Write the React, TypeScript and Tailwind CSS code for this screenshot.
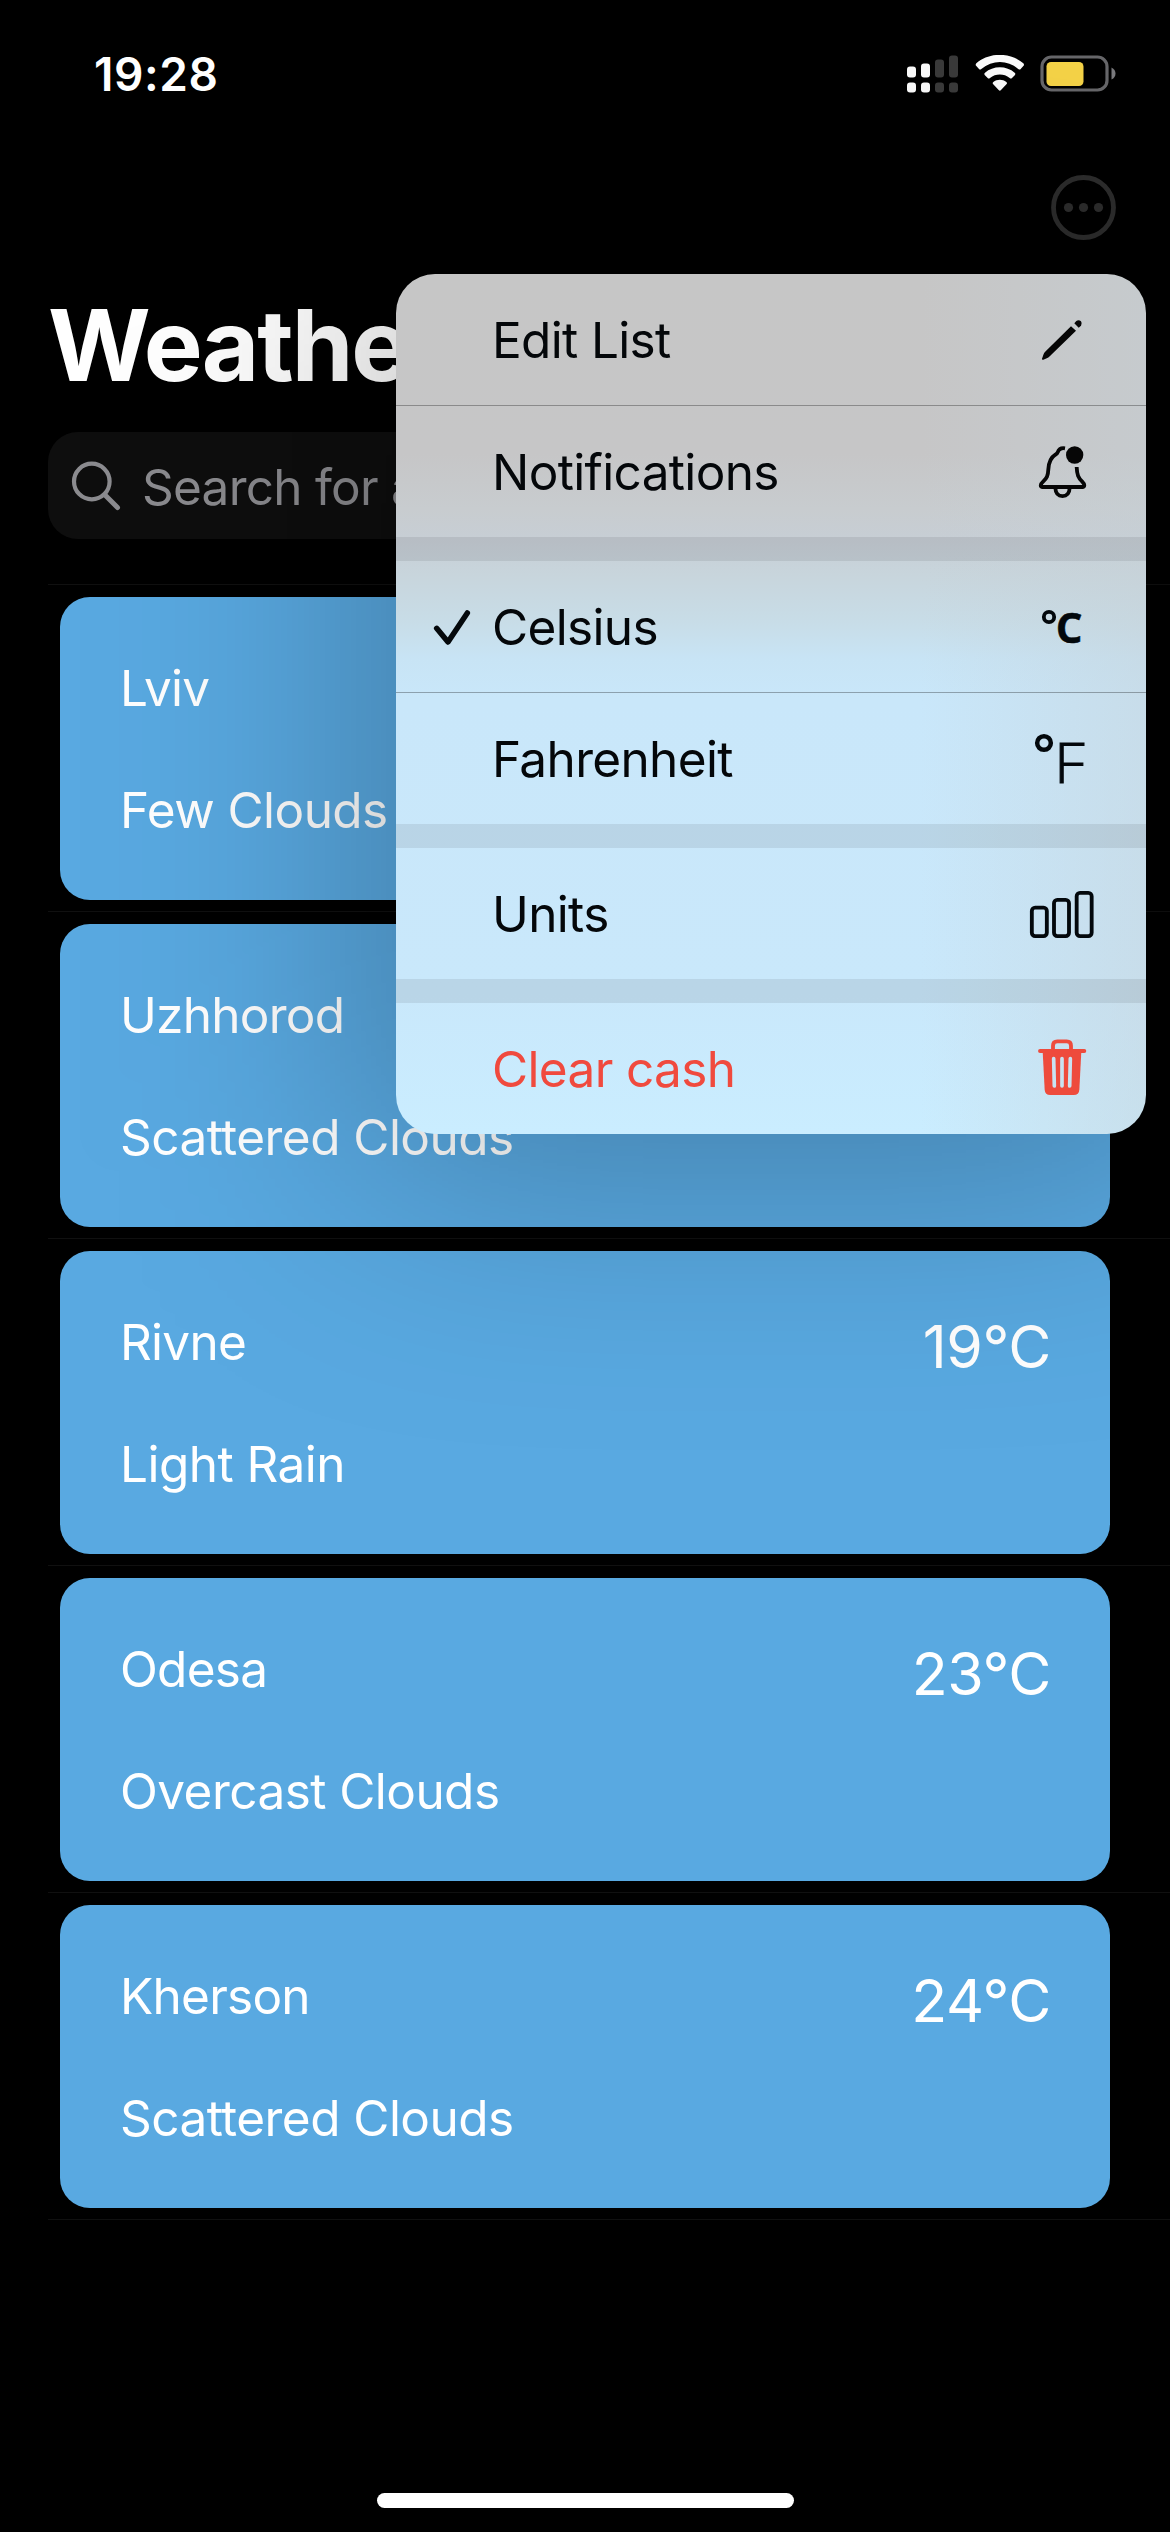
import React from "react";

const cities = [
  { name: "Lviv", sky: "Few Clouds", temp: "18°C" },
  { name: "Uzhhorod", sky: "Scattered Clouds", temp: "21°C" },
  { name: "Rivne", sky: "Light Rain", temp: "19°C" },
  { name: "Odesa", sky: "Overcast Clouds", temp: "23°C" },
  { name: "Kherson", sky: "Scattered Clouds", temp: "24°C" },
];

function StatusBar() {
  return (
    <header className="flex h-[148px] items-center justify-between pr-[53px] pl-[94px]">
      <span className="text-[46px] leading-none font-semibold tracking-[0.6px]">19:28</span>
      <div className="flex items-center">
        <svg className="h-[38px] w-[52px]" viewBox="0 0 52 38">
          <g fill="#fff">
            <rect x="0" y="11.5" width="9" height="11" rx="3" />
            <rect x="14" y="8.5" width="9" height="14" rx="3" />
            <rect x="0" y="27.5" width="9" height="10" rx="3" />
            <rect x="14" y="27.5" width="9" height="10" rx="3" />
          </g>
          <g fill="#3b3b3b">
            <rect x="28" y="4.5" width="9" height="18" rx="3" />
            <rect x="42" y="0.5" width="9" height="22" rx="3" />
            <rect x="28" y="27.5" width="9" height="10" rx="3" />
            <rect x="42" y="27.5" width="9" height="10" rx="3" />
          </g>
        </svg>
        <svg className="ml-[16px] h-[38px] w-[50px]" viewBox="0 0 150 114">
          <g fill="#fff">
            <path d="M4 33 Q0 29 4 25 C42 -9 106 -9 145 25 Q149 29 145 33 L137 42 Q134 45 130 42 C98 14 52 14 19 42 Q15 45 12 42 Z" />
            <path d="M29 60 Q26 56 30 53 C54 31 95 31 119 53 Q123 56 120 60 L111 69 Q108 72 104 69 C87 55 62 55 45 69 Q41 72 38 69 Z" />
            <path d="M54 87 Q51 84 55 81 C66 72 83 72 94 81 Q98 84 95 87 L78 105 Q74.5 109 71 105 Z" />
          </g>
        </svg>
        <svg className="ml-[15px] h-[38px] w-[77px]" viewBox="0 0 77 38">
          <rect x="2" y="2" width="65" height="33" rx="9.5" fill="none" stroke="#68686b" strokeWidth="3.2" />
          <rect x="6.5" y="7" width="37" height="24" rx="4.5" fill="#f8d648" />
          <path d="M71.5 12.5 q4 2 4 6 q0 4 -4 6 z" fill="#7b7b7e" />
        </svg>
      </div>
    </header>
  );
}

function CityRow({ name, sky, temp }: { name: string; sky: string; temp: string }) {
  return (
    <li className="border-t border-[#101010] pt-[12px] pr-[60px] pb-[11px] pl-[12px]">
      <article className="flex h-[303px] justify-between rounded-[30px] bg-[#59a9e1] pr-[59px] pl-[60px]">
        <div className="flex flex-col pt-[61px] text-[49.5px] leading-[60px]">
          <h2 className="tracking-[-0.75px]">{name}</h2>
          <p className="mt-[62px] tracking-[-0.55px]">{sky}</p>
        </div>
        <span className="pt-[60px] text-[59px] leading-[72px] tracking-[-0.4px]">{temp}</span>
      </article>
    </li>
  );
}

const PencilIcon = () => (
  <svg className="h-[131px] w-[84px]" viewBox="180 42 252 393" fill="#060606">
    <path d="M246 296 L251 282 Q253 278 257 274 L333 199 L348 212 L270 288 Q266 292 262 294 L250 299 Q245 300 246 296 Z" />
    <path d="M343 190 L349 183 Q356 178 363 184 Q368 191 363 197 L356 203 Z" />
  </svg>
);

const BellIcon = () => (
  <svg className="h-[131px] w-[84px]" viewBox="180 438 252 393" fill="none" stroke="#060606" strokeWidth="11.5">
    <path d="M315 565 C303 563 296 569 293 577 Q292 581 286 584 C270 594 266 610 265 628 C264 649 260 655 250 664 C240 673 240 681 248 681 H367 C375 681 375 673 366 664 C355 654 351 645 350 621" />
    <path d="M286 684 C287 701 296 708.5 307.5 708.5 C319 708.5 328 701 329 684" />
    <circle cx="344" cy="585" r="26" fill="#060606" stroke="none" />
  </svg>
);

const CelsiusIcon = () => (
  <svg className="h-[131px] w-[84px] font-['Open_Sans',sans-serif]" viewBox="180 3 252 393">
    <circle cx="267" cy="171" r="15.5" fill="none" stroke="#03080c" strokeWidth="11.5" />
    <text x="287.5" y="247.5" fontSize="126" fontWeight="700" fill="#03080c" stroke="#03080c" strokeWidth="1.5">C</text>
  </svg>
);

const FahrenheitIcon = () => (
  <svg className="h-[131px] w-[84px] font-['Open_Sans',sans-serif]" viewBox="180 399 252 393">
    <circle cx="252" cy="549" r="20.5" fill="none" stroke="#03080c" strokeWidth="13.5" />
    <text x="282" y="668" fontSize="165" fontWeight="300" textLength="92" lengthAdjust="spacingAndGlyphs" fill="#03080c" stroke="#03080c" strokeWidth="3">F</text>
  </svg>
);

const BarsIcon = () => (
  <svg className="h-[131px] w-[84px]" viewBox="180 24 252 393" fill="none" stroke="#03080c" strokeWidth="11.5">
    <rect x="215.5" y="203" width="45" height="85.5" rx="10" />
    <rect x="282" y="179.5" width="45" height="109" rx="10" />
    <rect x="350" y="158.5" width="45" height="130" rx="10" />
  </svg>
);

const TrashIcon = () => (
  <svg className="h-[131px] w-[84px]" viewBox="180 489 252 393">
    <mask id="slots">
      <rect x="180" y="489" width="252" height="393" fill="#fff" />
      <g stroke="#000" strokeWidth="11" strokeLinecap="round">
        <path d="M281 656 L283 738" />
        <path d="M306 656 V738" />
        <path d="M331 656 L329 738" />
      </g>
    </mask>
    <g stroke="#ee4b3c" strokeWidth="11.5" fill="none" strokeLinecap="round">
      <path d="M240 633 H373" />
      <path d="M279 630 V617 Q279 604 292 604 H320 Q333 604 333 617 V630" />
    </g>
    <path d="M248 634 H364 L358 749 Q357 765 341 765 H271 Q255 765 254 749 Z" fill="#ee4b3c" mask="url(#slots)" />
  </svg>
);

const CheckIcon = () => (
  <svg className="h-[131px] w-[96px]" viewBox="18 903 288 393">
    <path d="M140 1105 L174 1146 L232 1059" fill="none" stroke="#05090c" strokeWidth="16.5" strokeLinecap="round" strokeLinejoin="round" />
  </svg>
);

function MenuItem({ label, icon, checked, danger, ruled }: { label: string; icon: React.ReactNode; checked?: boolean; danger?: boolean; ruled?: boolean }) {
  return (
    <>
      {ruled && <div className="h-px bg-black/30" />}
      <button className="flex h-[131px] w-full items-center pr-[42px]">
        <span className="w-[96px]">{checked && <CheckIcon />}</span>
        <span className={`flex-1 text-left text-[49.5px] leading-[60px] tracking-[-0.65px] ${danger ? "text-[#f04a3e]" : "text-[#04070a]"}`}>{label}</span>
        {icon}
      </button>
    </>
  );
}

const Gap = () => <div className="h-[24px] bg-black/[0.08]" />;

function Menu() {
  return (
    <div className="absolute top-[274px] left-[396px] w-[750px]">
      <div className="absolute -inset-[38px] rounded-[39px] bg-black/25 blur-[130px]" />
      <nav className="relative overflow-hidden rounded-[39px] bg-[linear-gradient(to_right,rgba(198,198,198,0)_70%,rgba(198,208,214,0.45)_100%),linear-gradient(to_bottom,#c6c6c6_0px,#c6c6c7_180px,#c8cccf_235px,#c7ced5_265px,#c8d5dc_300px,#c8dde8_350px,#c8e4f5_385px,#c9e7fa_425px,#c9e8fb_720px,#caedff_860px)]">
        <MenuItem label="Edit List" icon={<PencilIcon />} />
        <MenuItem label="Notifications" icon={<BellIcon />} ruled />
        <Gap />
        <MenuItem label="Celsius" icon={<CelsiusIcon />} checked />
        <MenuItem label="Fahrenheit" icon={<FahrenheitIcon />} ruled />
        <Gap />
        <MenuItem label="Units" icon={<BarsIcon />} />
        <Gap />
        <MenuItem label="Clear cash" icon={<TrashIcon />} danger />
      </nav>
    </div>
  );
}

export default function App() {
  return (
    <main className="relative flex h-[2532px] w-[1170px] flex-col overflow-hidden bg-black font-[Inter,sans-serif] text-white">
      <StatusBar />
      <div className="flex h-[126px] justify-end pt-[27px] pr-[54px]">
        <svg className="size-[65px]" viewBox="0 0 65 65">
          <circle cx="32.5" cy="32.5" r="30" fill="none" stroke="#2e2e2e" strokeWidth="4.8" />
          <g fill="#2e2e2e">
            <circle cx="17.5" cy="32.5" r="4.6" />
            <circle cx="32.5" cy="32.5" r="4.6" />
            <circle cx="47.5" cy="32.5" r="4.6" />
          </g>
        </svg>
      </div>
      <h1 className="h-[158px] pt-[11px] pl-[48px] text-[99px] leading-[120px] font-bold tracking-[-2px]">Weather</h1>
      <div className="mr-[48px] ml-[48px] flex h-[107px] items-center rounded-[30px] bg-[#0e0e0e] pl-[23px] text-[#8b8b8f]">
        <svg className="h-[52px] w-[52px]" viewBox="0 0 52 52" fill="none" stroke="currentColor" strokeWidth="4.2" strokeLinecap="round">
          <circle cx="20.8" cy="21.5" r="17.8" />
          <path d="M34 35 L46.5 47.5" strokeWidth="5" />
        </svg>
        <span className="ml-[19px] pt-[2px] text-[49.5px] leading-[60px] tracking-[-0.75px]">Search for a city</span>
      </div>
      <ul className="mt-[45px] ml-[48px] border-b border-[#101010]">
        {cities.map((city) => (
          <CityRow key={city.name} {...city} />
        ))}
      </ul>
      <div className="mt-auto mb-[24px] h-[15px] w-[417px] self-center rounded-full bg-white" />
      <Menu />
    </main>
  );
}
